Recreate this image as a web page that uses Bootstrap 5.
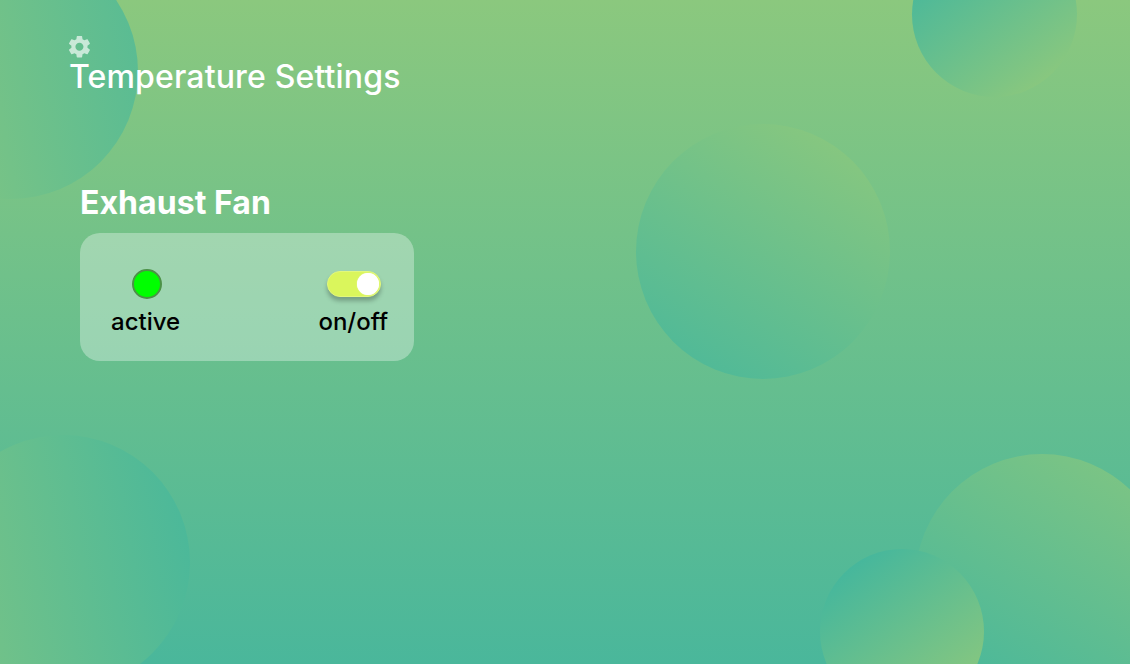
<!DOCTYPE html>
<html lang="en">
<head>
<meta charset="utf-8">
<meta name="viewport" content="width=device-width, initial-scale=1">
<title>Temperature Settings</title>
<link href="https://cdn.jsdelivr.net/npm/bootstrap@5.3.0/dist/css/bootstrap.min.css" rel="stylesheet">
<style>
  :root { --leaf: #8cc87d; --teal: #46b79c; }
  body { font-family: Inter, sans-serif; }
  .screen { height: 664px; background: linear-gradient(180deg, #8bc87e, #4ab79b); padding: 36px 67px; }
  .orb { width: 254px; height: 255px; z-index: 0; }
  .orb-sm { width: 165px; height: 165px; }
  .orb-a { left: -116px; top: -56px; background: linear-gradient(80deg, var(--leaf) -5%, var(--teal) 134%); }
  .orb-b { left: 912px; top: -68px; background: linear-gradient(142deg, var(--teal) 14%, var(--leaf) 90%); }
  .orb-c { left: 636px; top: 124px; background: linear-gradient(209deg, var(--leaf) 4%, var(--teal) 103%); }
  .orb-d { left: -64px; top: 435px; background: linear-gradient(80deg, var(--leaf) -32%, var(--teal) 105%); }
  .orb-e { left: 915px; top: 454px; background: linear-gradient(209deg, var(--leaf) -14%, var(--teal) 92%); }
  .orb-f { left: 820px; top: 549px; width: 164px; background: linear-gradient(142deg, var(--teal) 14%, var(--leaf) 92%); }
  .layer { z-index: 1; }
  .gear { width: 24px; height: 22px; }
  .page-title { font-size: 32px; line-height: 39px; font-weight: 500; padding-left: 2px; letter-spacing: .15px; margin-top: -1px; }
  .device { width: 334px; margin: 87px 0 0 13px; }
  .device-title { font-size: 32px; line-height: 39px; font-weight: 700; letter-spacing: .05px; }
  .panel { height: 128px; margin-top: 11px; border-radius: 20px; background: rgba(255,255,255,.33); padding: 36px 26px 0 31px; }
  .caption-text { font-size: 24px; line-height: 29px; font-weight: 500; font-variant-ligatures: none; color: #000; }
  .lamp { width: 30px; height: 30px; background: #0f0; border: 2px solid #4c9247; margin-left: 3px; }
  .toggle { width: 54px; height: 26px; margin: 2px 0 2px 1px; background: #daf65c; border: 1px solid #e2f87c; box-shadow: 0 4px 4px rgba(0,0,0,.25); padding-right: 1px; }
  .knob { width: 22px; height: 22px; background: #fff; box-shadow: 0 0 1px #fff; }
</style>
</head>
<body>
<main class="screen position-relative overflow-hidden">
  <div class="orb orb-a position-absolute rounded-circle"></div>
  <div class="orb orb-sm orb-b position-absolute rounded-circle"></div>
  <div class="orb orb-c position-absolute rounded-circle"></div>
  <div class="orb orb-d position-absolute rounded-circle"></div>
  <div class="orb orb-e position-absolute rounded-circle"></div>
  <div class="orb orb-sm orb-f position-absolute rounded-circle"></div>

  <div class="layer position-relative">
    <header class="text-white">
      <svg class="gear d-block" viewBox="0 0 24 22" fill="#fff" fill-opacity=".65" aria-hidden="true">
        <path transform="translate(-1.0 -2.7) scale(1.12)" d="M19.14 12.94c.04-.3.06-.61.06-.94 0-.32-.02-.64-.07-.94l2.03-1.58c.18-.14.23-.41.12-.61l-1.92-3.32c-.12-.22-.37-.29-.59-.22l-2.39.96c-.5-.38-1.03-.7-1.62-.94l-.36-2.54c-.04-.24-.24-.41-.48-.41h-3.84c-.24 0-.43.17-.47.41l-.36 2.54c-.59.24-1.13.57-1.62.94l-2.39-.96c-.22-.08-.47 0-.59.22L2.74 8.87c-.12.21-.08.47.12.61l2.03 1.58c-.05.3-.09.63-.09.94s.02.64.07.94l-2.03 1.58c-.18.14-.23.41-.12.61l1.92 3.32c.12.22.37.29.59.22l2.39-.96c.5.38 1.03.7 1.62.94l.36 2.54c.05.24.24.41.48.41h3.84c.24 0 .44-.17.47-.41l.36-2.54c.59-.24 1.13-.56 1.62-.94l2.39.96c.22.08.47 0 .59-.22l1.92-3.32c.12-.22.07-.47-.12-.61l-2.01-1.58zM12 15.6c-1.98 0-3.6-1.62-3.6-3.6s1.62-3.6 3.6-3.6 3.6 1.62 3.6 3.6-1.62 3.6-3.6 3.6z"/>
      </svg>
      <h1 class="page-title mb-0">Temperature Settings</h1>
    </header>

    <section class="device">
      <h2 class="device-title text-white mb-0">Exhaust Fan</h2>
      <div class="panel d-flex justify-content-between align-items-start">
        <div class="d-flex flex-column align-items-center gap-2">
          <span class="lamp rounded-circle"></span>
          <span class="caption-text">active</span>
        </div>
        <div class="d-flex flex-column align-items-center gap-2">
          <span class="toggle rounded-pill d-flex align-items-center justify-content-end" role="switch" aria-checked="true">
            <span class="knob rounded-circle"></span>
          </span>
          <span class="caption-text">on/off</span>
        </div>
      </div>
    </section>
  </div>
</main>
<script src="https://cdn.jsdelivr.net/npm/bootstrap@5.3.0/dist/js/bootstrap.bundle.min.js"></script>
</body>
</html>
